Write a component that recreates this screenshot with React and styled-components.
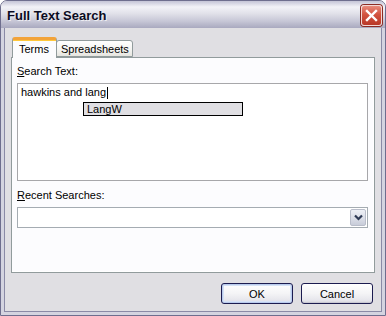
import React from 'react';
import styled, { createGlobalStyle } from 'styled-components';

const GlobalStyle = createGlobalStyle`
  html, body {
    margin: 0;
    padding: 0;
    background: #ffffff;
  }
  body {
    font-family: "Liberation Sans", Arial, sans-serif;
    font-size: 11px;
    color: #000;
  }
`;

const App = () => {
  return (
    <>
      <GlobalStyle />
      <Window>
        <TitleBar>
          <Title>Full Text Search</Title>
          <CloseButton aria-label="Close">
            <svg width="13" height="13" viewBox="0 0 13 13">
              <path
                d="M2 2 L11 11 M11 2 L2 11"
                stroke="#ffffff"
                strokeWidth="2.4"
                strokeLinecap="square"
              />
            </svg>
          </CloseButton>
        </TitleBar>
        <Body>
          <TabStrip>
            <Tab $active>Terms</Tab>
            <Tab>Spreadsheets</Tab>
          </TabStrip>
          <Panel>
            <Label>
              <u>S</u>earch Text:
            </Label>
            <TextArea>
              <TypedText>
                hawkins and lang
                <Caret />
              </TypedText>
              <Suggestion>LangW</Suggestion>
            </TextArea>
            <Label $gap={8}>
              <u>R</u>ecent Searches:
            </Label>
            <Combo>
              <ComboButton>
                <svg width="9" height="7" viewBox="0 0 9 7">
                  <path
                    d="M1 1.5 L4.5 5 L8 1.5"
                    fill="none"
                    stroke="#2f3a55"
                    strokeWidth="2.2"
                  />
                </svg>
              </ComboButton>
            </Combo>
          </Panel>
          <ButtonRow>
            <PushButton $default>OK</PushButton>
            <PushButton>Cancel</PushButton>
          </ButtonRow>
        </Body>
      </Window>
    </>
  );
};

const Window = styled.div`
  width: 386px;
  height: 316px;
  box-sizing: border-box;
  display: flex;
  flex-direction: column;
  background: #e0dfe3;
  border: 1px solid #6e6e8e;
  border-radius: 7px 7px 0 0;
  overflow: hidden;
`;

const TitleBar = styled.div`
  height: 27px;
  flex: none;
  box-sizing: border-box;
  display: flex;
  align-items: center;
  justify-content: space-between;
  padding: 0 3px 0 6px;
  background: linear-gradient(
    180deg,
    #c4c4d6 0%,
    #f2f2f7 22%,
    #e2e2ea 45%,
    #c6c6d6 75%,
    #a9a9bf 100%
  );
`;

const Title = styled.span`
  font-family: "Liberation Sans", Arial, sans-serif;
  font-weight: bold;
  font-size: 13px;
  color: #0b0b22;
  text-shadow: 1px 1px 0 rgba(255, 255, 255, 0.7);
  padding-top: 2px;
`;

const CloseButton = styled.button`
  width: 21px;
  height: 21px;
  padding: 0;
  margin-top: 2px;
  display: grid;
  place-items: center;
  border: 1px solid #f4d8d4;
  border-radius: 3px;
  background: linear-gradient(180deg, #e88a7c 0%, #d2533f 45%, #b93828 100%);
  box-shadow: 0 0 0 1px #8c2c24;

  svg {
    display: block;
  }
`;

const Body = styled.div`
  flex: 1;
  min-height: 0;
  box-sizing: border-box;
  display: flex;
  flex-direction: column;
  padding: 9px 7px 8px 7px;
  border: 3px solid #d4d4e0;
  border-top: none;
  box-shadow: inset 1px 0 #8a8aa6, inset -1px 0 #8a8aa6, inset 0 -1px #8a8aa6;
`;

const TabStrip = styled.div`
  height: 20px;
  flex: none;
  display: flex;
  align-items: flex-end;
  padding-left: 1px;
`;

const Tab = styled.div`
  position: relative;
  box-sizing: border-box;
  height: ${(p) => (p.$active ? '21px' : '17px')};
  margin-bottom: ${(p) => (p.$active ? '-1px' : '0')};
  z-index: ${(p) => (p.$active ? 1 : 0)};
  padding: ${(p) => (p.$active ? '3px 7px 0 6px' : '2px 3px 0 4px')};
  border: 1px solid #919b9c;
  border-bottom: ${(p) => (p.$active ? 'none' : '1px solid #919b9c')};
  border-top: ${(p) => (p.$active ? '3px solid #f2a33a' : '1px solid #919b9c')};
  border-radius: 3px 3px 0 0;
  background: ${(p) =>
    p.$active ? '#fcfcfe' : 'linear-gradient(180deg, #ffffff 0%, #f3f3f0 60%, #e6e5e0 100%)'};
  box-shadow: ${(p) => (p.$active ? 'inset 0 1px #ffc83c' : 'none')};
  margin-left: ${(p) => (p.$active ? '0' : '-1px')};
  line-height: 13px;
  white-space: nowrap;
`;

const Panel = styled.div`
  flex: 1;
  min-height: 0;
  box-sizing: border-box;
  display: flex;
  flex-direction: column;
  padding: 7px 6px 0 5px;
  border: 1px solid #919b9c;
  background: #fcfcfe;
  box-shadow: inset -1px -1px #ffffff;
`;

const Label = styled.div`
  line-height: 13px;
  margin-top: ${(p) => p.$gap || 0}px;
  margin-bottom: 5px;

  u {
    text-decoration-thickness: 1px;
    text-underline-offset: 1px;
  }
`;

const TextArea = styled.div`
  position: relative;
  height: 98px;
  box-sizing: border-box;
  border: 1px solid #a7a7aa;
  background: #ffffff;
  padding: 2px 3px;
`;

const TypedText = styled.div`
  line-height: 13px;
  display: flex;
  align-items: center;
`;

const Caret = styled.span`
  display: inline-block;
  width: 1px;
  height: 12px;
  background: #000;
  margin-left: 1px;
`;

const Suggestion = styled.div`
  position: absolute;
  left: 65px;
  top: 18px;
  width: 160px;
  height: 14px;
  box-sizing: border-box;
  border: 1px solid #000;
  background: #e0dfe3;
  padding-left: 3px;
  line-height: 12px;
`;

const Combo = styled.div`
  height: 21px;
  box-sizing: border-box;
  border: 1px solid #a5acb2;
  background: #ffffff;
  display: flex;
  justify-content: flex-end;
  padding: 1px;
`;

const ComboButton = styled.div`
  width: 16px;
  box-sizing: border-box;
  display: grid;
  place-items: center;
  border: 1px solid #b9bdca;
  border-radius: 2px;
  background: linear-gradient(180deg, #eef0f6 0%, #d9dce6 60%, #c8ccd9 100%);

  svg {
    display: block;
  }
`;

const ButtonRow = styled.div`
  flex: none;
  display: flex;
  justify-content: flex-end;
  gap: 8px;
  margin-top: 10px;
  padding-right: 2px;
`;

const PushButton = styled.button`
  width: 72px;
  height: 21px;
  padding: 0;
  font-family: "Liberation Sans", Arial, sans-serif;
  font-size: 11px;
  color: #000;
  border: 1px solid #1c1c50;
  border-radius: 3px;
  background: linear-gradient(180deg, #ffffff 0%, #f4f4f6 50%, #e6e6ec 85%, #d4d4dc 100%);
  box-shadow: ${(p) =>
    p.$default ? 'inset 0 0 0 1px #b9cbec, inset 0 0 0 2px #d6e2f6' : 'inset 0 -1px #c8c8d2'};
`;

export default App;
